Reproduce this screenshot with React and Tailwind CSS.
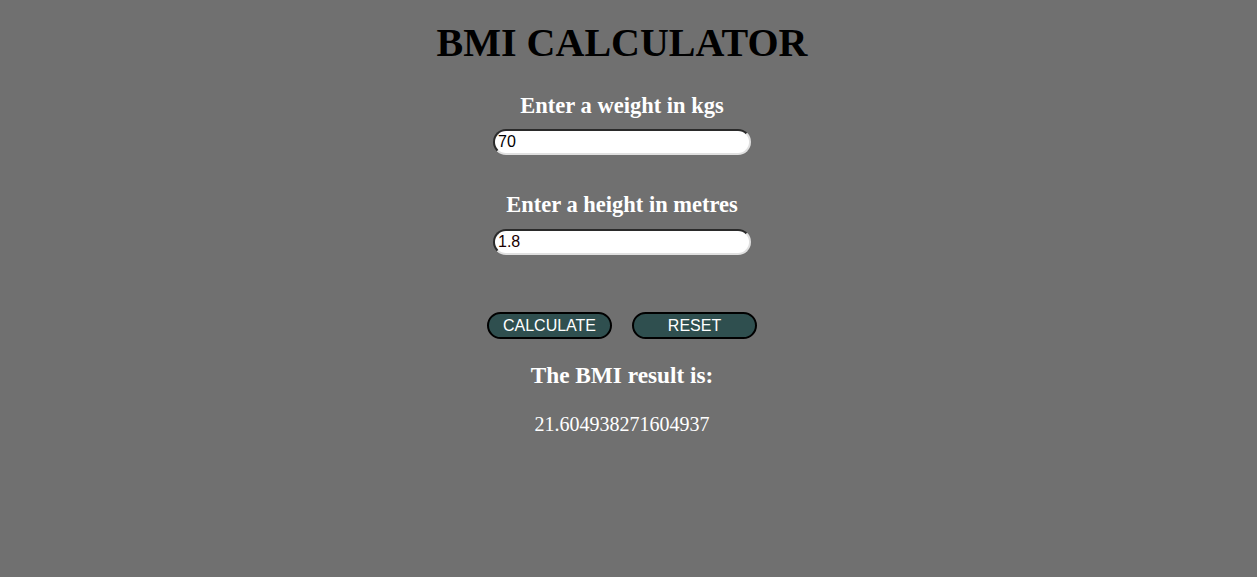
import React, { useState } from "react";

const serif = { fontFamily: '"Liberation Serif", "Times New Roman", serif' };

export default function App() {
  const [weight, setWeight] = useState("70");
  const [height, setHeight] = useState("1.8");
  const [result, setResult] = useState("21.604938271604937");

  const calculate = () => {
    const w = parseFloat(weight);
    const h = parseFloat(height);
    if (w && h) setResult(String(w / (h * h)));
  };

  const reset = () => {
    setWeight("");
    setHeight("");
    setResult("");
  };

  return (
    <div
      className="min-h-[577px] w-full bg-[#707070] pr-[13px] text-center"
      style={serif}
    >
      <h1 className="pt-[20px] text-[40px] font-bold leading-[46px] text-black">
        BMI CALCULATOR
      </h1>

      <div className="mt-[27px] flex flex-col items-center">
        <label className="text-[22.5px] font-bold leading-[26px] text-white">
          Enter a weight in kgs
        </label>
        <input
          value={weight}
          onChange={(e) => setWeight(e.target.value)}
          className="mt-[10px] h-[26px] w-[258px] rounded-full border-2 border-t-[#2a2a2a] border-l-[#2a2a2a] border-r-[#e0e0e0] border-b-[#e0e0e0] bg-white px-[3px] text-[16px] text-black outline-none"
          style={{ fontFamily: '"Liberation Sans", Arial, sans-serif' }}
        />

        <label className="mt-[37px] text-[22.5px] font-bold leading-[26px] text-white">
          Enter a height in metres
        </label>
        <input
          value={height}
          onChange={(e) => setHeight(e.target.value)}
          className="mt-[11px] h-[26px] w-[258px] rounded-full border-2 border-t-[#2a2a2a] border-l-[#2a2a2a] border-r-[#e0e0e0] border-b-[#e0e0e0] bg-white px-[3px] text-[16px] text-[#1a0000] outline-none"
          style={{ fontFamily: '"Liberation Sans", Arial, sans-serif' }}
        />

        <div
          className="mt-[57px] flex gap-[20px]"
          style={{ fontFamily: '"Liberation Sans", Arial, sans-serif' }}
        >
          <button
            onClick={calculate}
            className="h-[27px] w-[125px] rounded-full border-2 border-black bg-[#2f4f4f] text-[16px] leading-[20px] text-white"
          >
            CALCULATE
          </button>
          <button
            onClick={reset}
            className="h-[27px] w-[125px] rounded-full border-2 border-black bg-[#2f4f4f] text-[16px] leading-[20px] text-white"
          >
            RESET
          </button>
        </div>

        <h2 className="mt-[23px] text-[23.3px] font-bold leading-[26px] text-white">
          The BMI result is:
        </h2>
        <p className="mt-[24px] text-[20px] leading-[24px] text-white">{result}</p>
      </div>
    </div>
  );
}
